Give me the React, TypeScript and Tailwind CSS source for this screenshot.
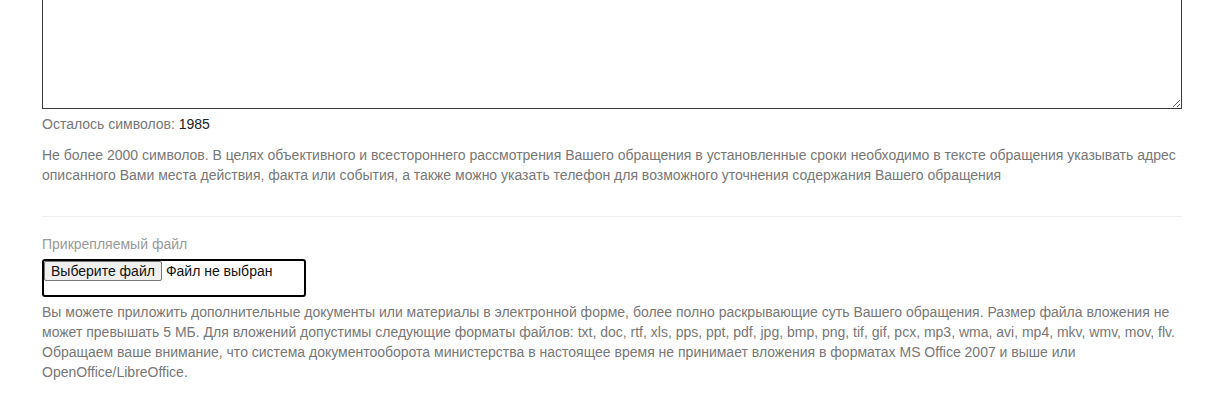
export default function App() {
    return (
        <div className="min-h-[416px] w-[1230px] bg-white font-['Liberation_Sans',Arial,sans-serif] text-[14px] leading-5 text-[#777]">
            <div className="ml-[42px] w-[1140px]">
                {/* message field, scrolled so only the lower part shows */}
                <textarea
                    className="block h-[109px] w-full border border-t-0 border-[#3a3a3a] bg-white outline-none"
                    defaultValue=""
                />
                <p className="mt-[5px]">
                    Осталось символов: <span className="text-[#222]">1985</span>
                </p>
                <p className="mt-[11px]">
                    Не более 2000 символов. В целях объективного и всестороннего рассмотрения Вашего обращения в установленные
                    сроки необходимо в тексте обращения указывать адрес описанного Вами места действия, факта или события, а также
                    можно указать телефон для возможного уточнения содержания Вашего обращения
                </p>

                <hr className="mt-[31px] border-t border-[#eee]" />

                <label className="mt-[17px] block text-[#999]">Прикрепляемый файл</label>
                <div className="mt-[5px] h-[38px] w-[264px] rounded-[3px] border-2 border-black p-0">
                    <div className="flex items-center">
                        <span className="flex h-[20px] items-center rounded-[2px] border border-[#767676] bg-[#efefef] px-[6px] text-[#111]">
                            Выберите файл
                        </span>
                        <span className="ml-[4px] text-[#111]">Файл не выбран</span>
                    </div>
                </div>
                <p className="mt-[5px]">
                    Вы можете приложить дополнительные документы или материалы в электронной форме, более полно раскрывающие суть
                    Вашего обращения. Размер файла вложения не может превышать 5 МБ. Для вложений допустимы следующие форматы
                    файлов: txt, doc, rtf, xls, pps, ppt, pdf, jpg, bmp, png, tif, gif, pcx, mp3, wma, avi, mp4, mkv, wmv, mov, flv.
                    Обращаем ваше внимание, что система документооборота министерства в настоящее время не принимает вложения в
                    форматах MS Office 2007 и выше или OpenOffice/LibreOffice.
                </p>
            </div>
        </div>
    );
}
